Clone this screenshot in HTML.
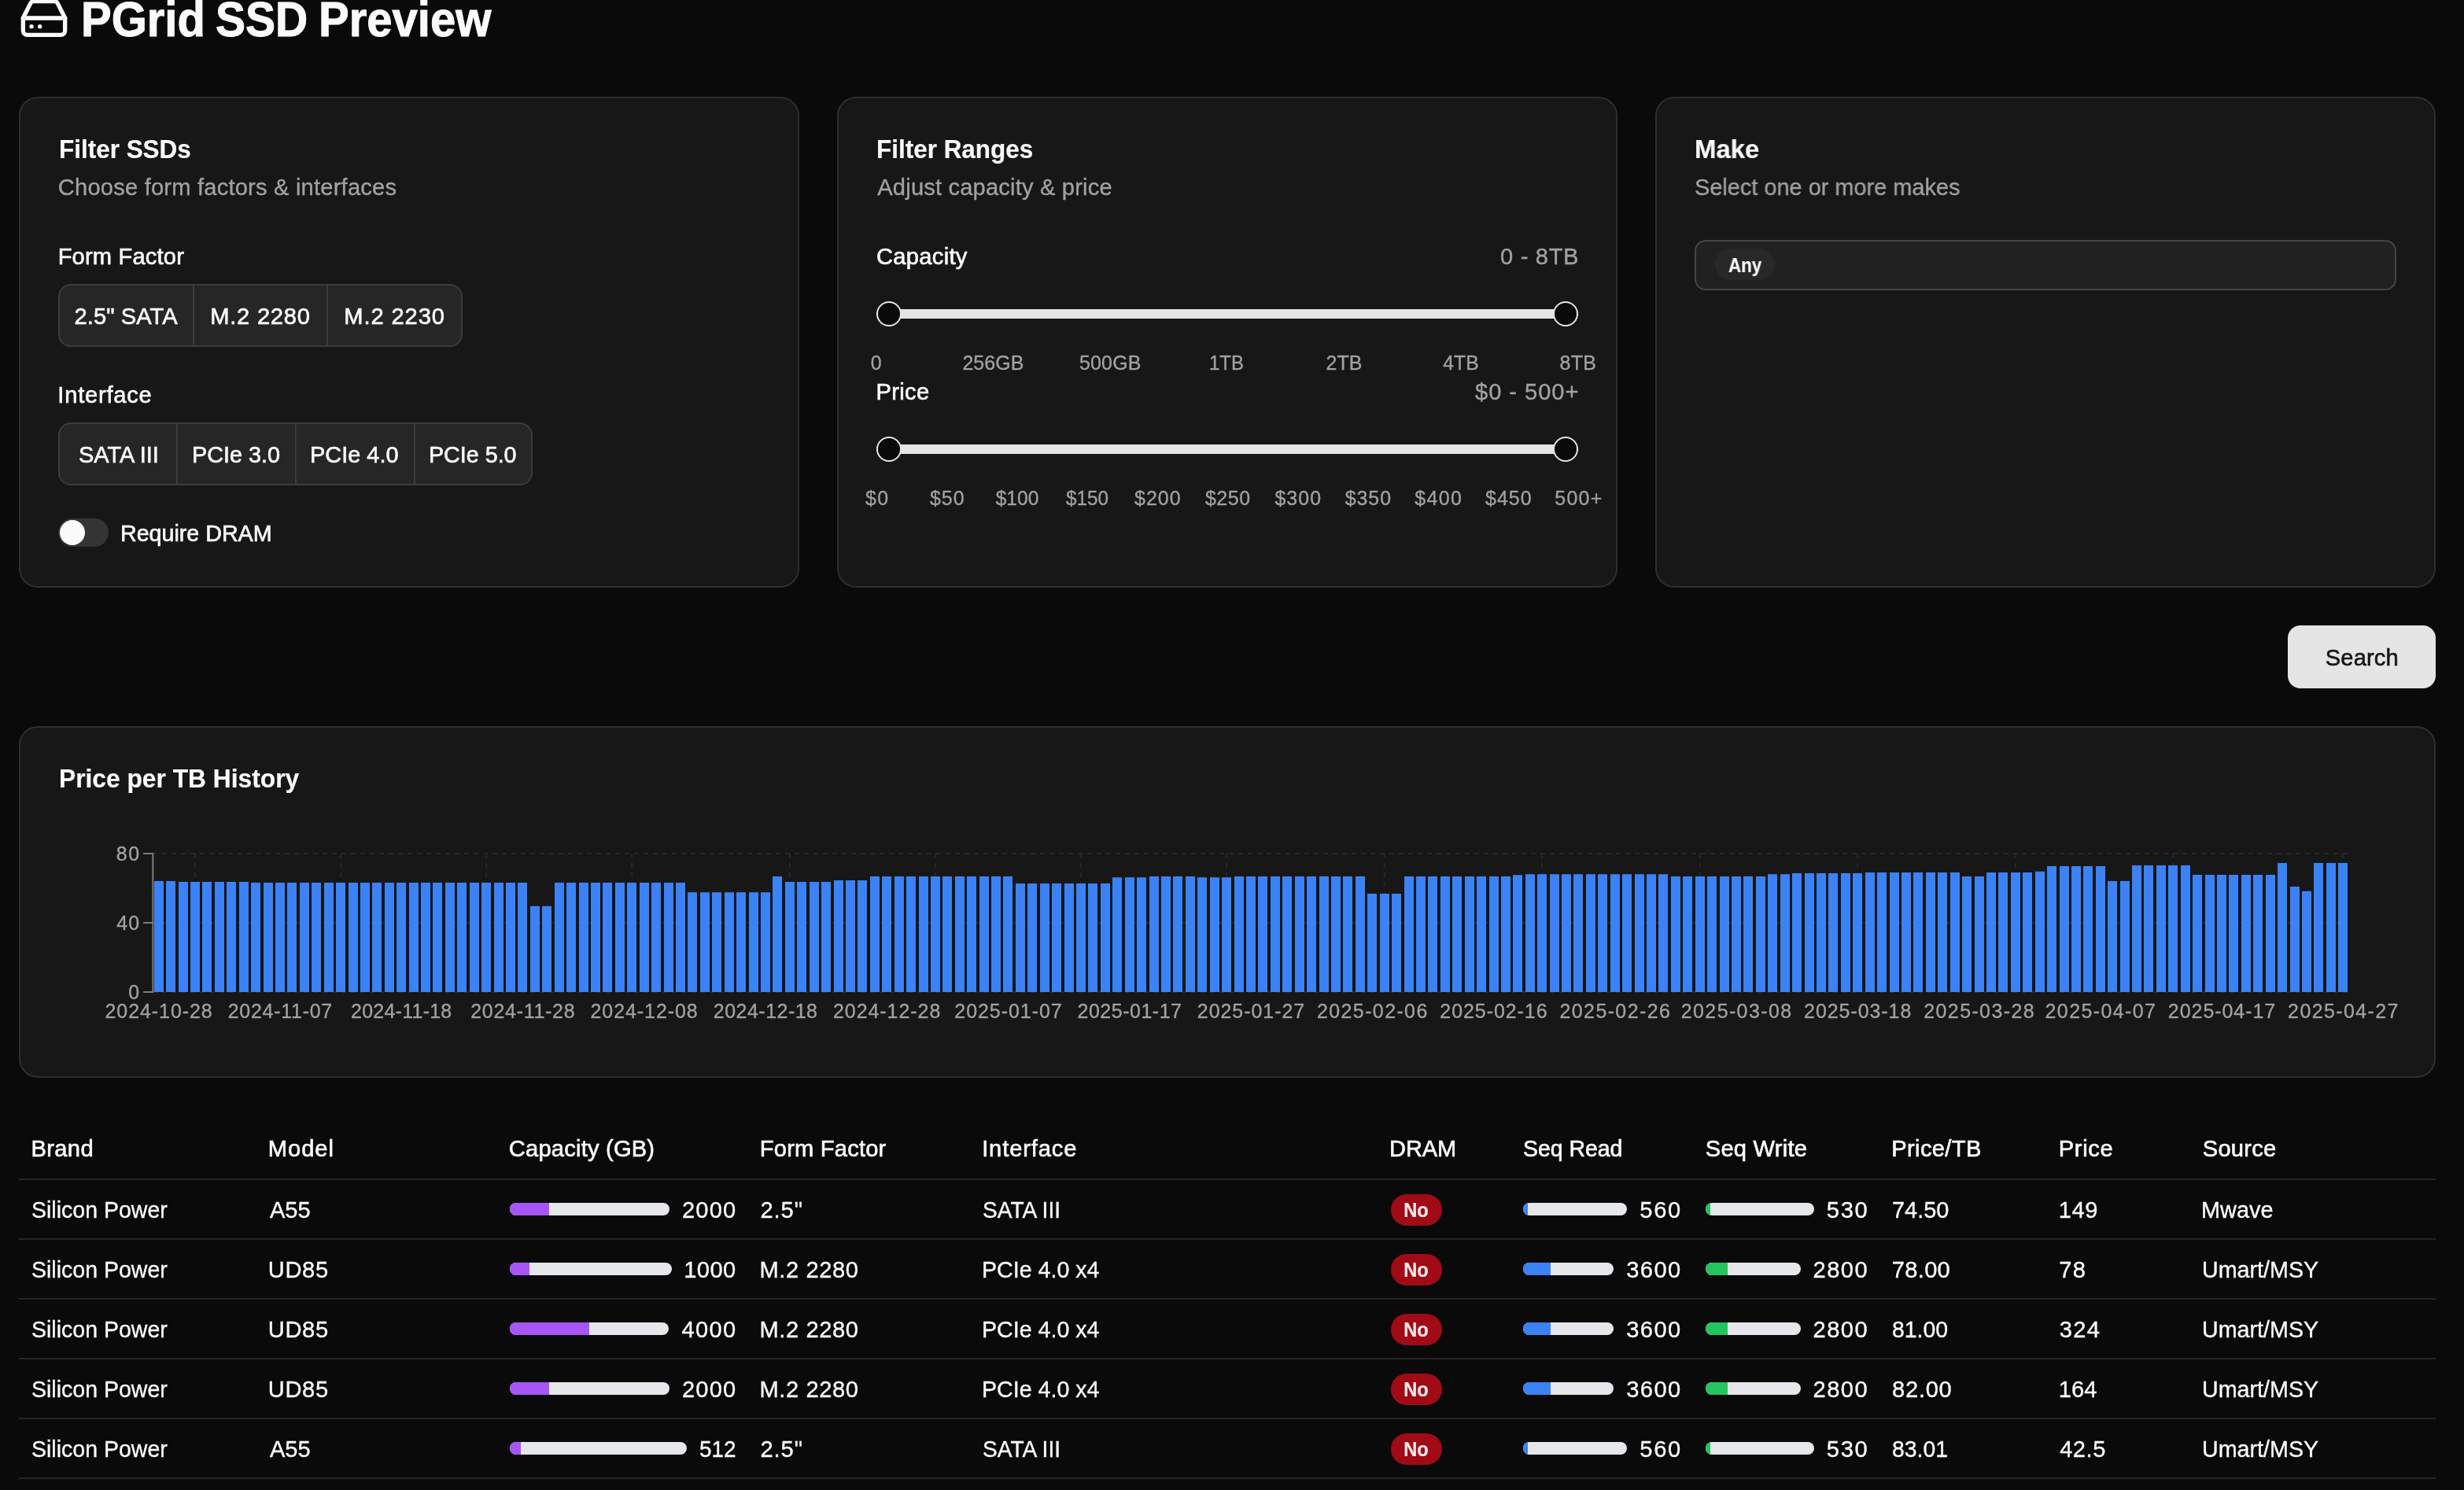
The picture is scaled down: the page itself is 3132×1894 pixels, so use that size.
<!DOCTYPE html>
<html><head><meta charset="utf-8"><title>PGrid SSD Preview</title>
<style>
html,body{margin:0;padding:0;background:#0a0a0a;}
body{width:3132px;height:1894px;position:relative;overflow:hidden;font-family:"Liberation Sans",sans-serif;}
#app{position:absolute;left:0;top:0;width:3132px;height:1894px;will-change:transform;}
.r{position:absolute;box-sizing:border-box;}
.t{position:absolute;white-space:nowrap;line-height:1;font-weight:400;}
</style></head><body><div id="app">
<svg class="r" style="left:24px;top:-9px" width="64" height="64" viewBox="0 0 24 24" fill="none" stroke="#fafafa" stroke-width="2" stroke-linecap="round" stroke-linejoin="round"><line x1="22" x2="2" y1="12" y2="12"/><path d="M5.45 5.11 2 12v6a2 2 0 0 0 2 2h16a2 2 0 0 0 2-2v-6l-3.45-6.89A2 2 0 0 0 16.76 4H7.24a2 2 0 0 0-1.79 1.11z"/><line x1="6" x2="6.01" y1="16" y2="16"/><line x1="10" x2="10.01" y1="16" y2="16"/></svg>
<span id="t1" class="t" style="font-size:62.4px;top:-6.45px;color:#fafafa;font-weight:700;-webkit-text-stroke:1.0px #fafafa;left:103.02px;transform-origin:0 50%;transform:scaleX(0.9295);">PGrid</span>
<span id="t2" class="t" style="font-size:62.4px;top:-6.45px;color:#fafafa;font-weight:700;-webkit-text-stroke:1.0px #fafafa;left:273.76px;transform-origin:0 50%;transform:scaleX(0.9138);">SSD</span>
<span id="t3" class="t" style="font-size:62.4px;top:-6.45px;color:#fafafa;font-weight:700;-webkit-text-stroke:1.0px #fafafa;left:404.62px;transform-origin:0 50%;transform:scaleX(0.9297);">Preview</span>
<div class="r" style="left:24.00px;top:123.00px;width:992.00px;height:624.00px;background:#171717;border:2px solid #2e2e2e;border-radius:24px;"></div>
<div class="r" style="left:1064.00px;top:123.00px;width:992.00px;height:624.00px;background:#171717;border:2px solid #2e2e2e;border-radius:24px;"></div>
<div class="r" style="left:2104.00px;top:123.00px;width:992.00px;height:624.00px;background:#171717;border:2px solid #2e2e2e;border-radius:24px;"></div>
<span id="t4" class="t" style="font-size:33.28px;top:173.11px;color:#fafafa;font-weight:700;-webkit-text-stroke:0.2px #fafafa;left:74.50px;transform-origin:0 50%;transform:scaleX(0.9454);">Filter SSDs</span>
<span id="t5" class="t" style="font-size:29.12px;top:223.69px;color:#a1a1a1;-webkit-text-stroke:0.35px #a1a1a1;letter-spacing:0.201px;left:73.87px;">Choose form factors &amp; interfaces</span>
<span id="t6" class="t" style="font-size:29.12px;top:311.69px;color:#fafafa;-webkit-text-stroke:0.65px #fafafa;letter-spacing:0.177px;left:73.66px;">Form Factor</span>
<div class="r" style="left:74.00px;top:361.00px;width:514.00px;height:80.00px;background:#262626;border:2px solid #3c3c3c;border-radius:16px;"></div>
<div class="r" style="left:245.00px;top:363.00px;width:2.00px;height:76.00px;background:#3c3c3c;"></div>
<div class="r" style="left:415.00px;top:363.00px;width:2.00px;height:76.00px;background:#3c3c3c;"></div>
<span id="t7" class="t" style="font-size:29.12px;top:387.69px;color:#fafafa;-webkit-text-stroke:0.65px #fafafa;letter-spacing:0.078px;left:94.49px;">2.5&quot; SATA</span>
<span id="t8" class="t" style="font-size:29.12px;top:387.69px;color:#fafafa;-webkit-text-stroke:0.65px #fafafa;letter-spacing:0.779px;left:267.16px;">M.2 2280</span>
<span id="t9" class="t" style="font-size:29.12px;top:387.69px;color:#fafafa;-webkit-text-stroke:0.65px #fafafa;letter-spacing:0.907px;left:437.26px;">M.2 2230</span>
<span id="t10" class="t" style="font-size:29.12px;top:487.69px;color:#fafafa;-webkit-text-stroke:0.65px #fafafa;letter-spacing:0.763px;left:73.36px;">Interface</span>
<div class="r" style="left:74.00px;top:537.00px;width:603.00px;height:80.00px;background:#262626;border:2px solid #3c3c3c;border-radius:16px;"></div>
<div class="r" style="left:224.00px;top:539.00px;width:2.00px;height:76.00px;background:#3c3c3c;"></div>
<div class="r" style="left:375.00px;top:539.00px;width:2.00px;height:76.00px;background:#3c3c3c;"></div>
<div class="r" style="left:525.50px;top:539.00px;width:2.00px;height:76.00px;background:#3c3c3c;"></div>
<span id="t11" class="t" style="font-size:29.12px;top:563.69px;color:#fafafa;-webkit-text-stroke:0.65px #fafafa;left:99.93px;transform-origin:0 50%;transform:scaleX(0.9945);">SATA III</span>
<span id="t12" class="t" style="font-size:29.12px;top:563.69px;color:#fafafa;-webkit-text-stroke:0.65px #fafafa;left:243.79px;transform-origin:0 50%;transform:scaleX(0.9886);">PCIe 3.0</span>
<span id="t13" class="t" style="font-size:29.12px;top:563.69px;color:#fafafa;-webkit-text-stroke:0.65px #fafafa;left:393.88px;transform-origin:0 50%;transform:scaleX(0.9931);">PCIe 4.0</span>
<span id="t14" class="t" style="font-size:29.12px;top:563.69px;color:#fafafa;-webkit-text-stroke:0.65px #fafafa;left:544.60px;transform-origin:0 50%;transform:scaleX(0.9849);">PCIe 5.0</span>
<div class="r" style="left:74.40px;top:659.00px;width:64.00px;height:36.00px;background:#343434;border-radius:18px;"></div>
<div class="r" style="left:76.00px;top:661.00px;width:32.00px;height:32.00px;background:#fafafa;border-radius:16px;"></div>
<span id="t15" class="t" style="font-size:29.12px;top:663.69px;color:#fafafa;-webkit-text-stroke:0.65px #fafafa;left:152.90px;transform-origin:0 50%;transform:scaleX(0.9839);">Require DRAM</span>
<span id="t16" class="t" style="font-size:33.28px;top:173.11px;color:#fafafa;font-weight:700;-webkit-text-stroke:0.2px #fafafa;left:1114.49px;transform-origin:0 50%;transform:scaleX(0.9457);">Filter Ranges</span>
<span id="t17" class="t" style="font-size:29.12px;top:223.69px;color:#a1a1a1;-webkit-text-stroke:0.35px #a1a1a1;letter-spacing:0.176px;left:1115.29px;">Adjust capacity &amp; price</span>
<span id="t18" class="t" style="font-size:29.12px;top:311.69px;color:#fafafa;-webkit-text-stroke:0.65px #fafafa;letter-spacing:0.310px;left:1113.97px;">Capacity</span>
<span id="t19" class="t" style="font-size:29.12px;top:311.69px;color:#a1a1a1;-webkit-text-stroke:0.35px #a1a1a1;letter-spacing:0.670px;right:1124.84px;">0 - 8TB</span>
<div class="r" style="left:1114.00px;top:393.00px;width:892.00px;height:12.00px;background:#e5e5e5;border-radius:6px;"></div>
<div class="r" style="left:1114.00px;top:383.00px;width:32.00px;height:32.00px;background:#0a0a0a;border:2px solid #e5e5e5;border-radius:16px;box-sizing:border-box;"></div>
<div class="r" style="left:1974.00px;top:383.00px;width:32.00px;height:32.00px;background:#0a0a0a;border:2px solid #e5e5e5;border-radius:16px;box-sizing:border-box;"></div>
<span id="t20" class="t" style="font-size:24.96px;top:448.77px;color:#a1a1a1;-webkit-text-stroke:0.35px #a1a1a1;letter-spacing:0.359px;left:1113.88px;transform:translateX(-50%);">0</span>
<span id="t21" class="t" style="font-size:24.96px;top:448.77px;color:#a1a1a1;-webkit-text-stroke:0.35px #a1a1a1;letter-spacing:0.046px;left:1262.42px;transform:translateX(-50%);">256GB</span>
<span id="t22" class="t" style="font-size:24.96px;top:448.77px;color:#a1a1a1;-webkit-text-stroke:0.35px #a1a1a1;letter-spacing:0.157px;left:1411.27px;transform:translateX(-50%);">500GB</span>
<span id="t23" class="t" style="font-size:24.96px;top:448.77px;color:#a1a1a1;-webkit-text-stroke:0.35px #a1a1a1;left:1559.42px;transform:translateX(-50%) scaleX(0.9613);">1TB</span>
<span id="t24" class="t" style="font-size:24.96px;top:448.77px;color:#a1a1a1;-webkit-text-stroke:0.35px #a1a1a1;letter-spacing:0.003px;left:1708.40px;transform:translateX(-50%);">2TB</span>
<span id="t25" class="t" style="font-size:24.96px;top:448.77px;color:#a1a1a1;-webkit-text-stroke:0.35px #a1a1a1;left:1857.40px;transform:translateX(-50%) scaleX(0.9937);">4TB</span>
<span id="t26" class="t" style="font-size:24.96px;top:448.77px;color:#a1a1a1;-webkit-text-stroke:0.35px #a1a1a1;letter-spacing:0.317px;left:2005.97px;transform:translateX(-50%);">8TB</span>
<span id="t27" class="t" style="font-size:29.12px;top:483.69px;color:#fafafa;-webkit-text-stroke:0.65px #fafafa;letter-spacing:0.364px;left:1113.46px;">Price</span>
<span id="t28" class="t" style="font-size:29.12px;top:483.69px;color:#a1a1a1;-webkit-text-stroke:0.35px #a1a1a1;letter-spacing:0.940px;right:1124.67px;">$0 - 500+</span>
<div class="r" style="left:1114.00px;top:565.00px;width:892.00px;height:12.00px;background:#e5e5e5;border-radius:6px;"></div>
<div class="r" style="left:1114.00px;top:555.00px;width:32.00px;height:32.00px;background:#0a0a0a;border:2px solid #e5e5e5;border-radius:16px;box-sizing:border-box;"></div>
<div class="r" style="left:1974.00px;top:555.00px;width:32.00px;height:32.00px;background:#0a0a0a;border:2px solid #e5e5e5;border-radius:16px;box-sizing:border-box;"></div>
<span id="t29" class="t" style="font-size:24.96px;top:620.77px;color:#a1a1a1;-webkit-text-stroke:0.35px #a1a1a1;letter-spacing:1.277px;left:1115.19px;transform:translateX(-50%);">$0</span>
<span id="t30" class="t" style="font-size:24.96px;top:620.77px;color:#a1a1a1;-webkit-text-stroke:0.35px #a1a1a1;letter-spacing:0.951px;left:1204.23px;transform:translateX(-50%);">$50</span>
<span id="t31" class="t" style="font-size:24.96px;top:620.77px;color:#a1a1a1;-webkit-text-stroke:0.35px #a1a1a1;left:1292.95px;transform:translateX(-50%) scaleX(0.9821);">$100</span>
<span id="t32" class="t" style="font-size:24.96px;top:620.77px;color:#a1a1a1;-webkit-text-stroke:0.35px #a1a1a1;left:1382.14px;transform:translateX(-50%) scaleX(0.9747);">$150</span>
<span id="t33" class="t" style="font-size:24.96px;top:620.77px;color:#a1a1a1;-webkit-text-stroke:0.35px #a1a1a1;letter-spacing:1.009px;left:1471.86px;transform:translateX(-50%);">$200</span>
<span id="t34" class="t" style="font-size:24.96px;top:620.77px;color:#a1a1a1;-webkit-text-stroke:0.35px #a1a1a1;letter-spacing:0.576px;left:1560.84px;transform:translateX(-50%);">$250</span>
<span id="t35" class="t" style="font-size:24.96px;top:620.77px;color:#a1a1a1;-webkit-text-stroke:0.35px #a1a1a1;letter-spacing:1.009px;left:1650.26px;transform:translateX(-50%);">$300</span>
<span id="t36" class="t" style="font-size:24.96px;top:620.77px;color:#a1a1a1;-webkit-text-stroke:0.35px #a1a1a1;letter-spacing:0.876px;left:1739.39px;transform:translateX(-50%);">$350</span>
<span id="t37" class="t" style="font-size:24.96px;top:620.77px;color:#a1a1a1;-webkit-text-stroke:0.35px #a1a1a1;letter-spacing:1.342px;left:1828.82px;transform:translateX(-50%);">$400</span>
<span id="t38" class="t" style="font-size:24.96px;top:620.77px;color:#a1a1a1;-webkit-text-stroke:0.35px #a1a1a1;letter-spacing:1.009px;left:1917.86px;transform:translateX(-50%);">$450</span>
<span id="t39" class="t" style="font-size:24.96px;top:620.77px;color:#a1a1a1;-webkit-text-stroke:0.35px #a1a1a1;letter-spacing:1.270px;left:2006.95px;transform:translateX(-50%);">500+</span>
<span id="t40" class="t" style="font-size:33.28px;top:173.11px;color:#fafafa;font-weight:700;-webkit-text-stroke:0.2px #fafafa;left:2154.40px;transform-origin:0 50%;transform:scaleX(0.9880);">Make</span>
<span id="t41" class="t" style="font-size:29.12px;top:223.69px;color:#a1a1a1;-webkit-text-stroke:0.35px #a1a1a1;left:2153.74px;transform-origin:0 50%;transform:scaleX(0.9932);">Select one or more makes</span>
<div class="r" style="left:2154.00px;top:305.00px;width:892.00px;height:64.00px;background:#212121;border:2px solid #444444;border-radius:14px;box-sizing:border-box;"></div>
<div class="r" style="left:2180.00px;top:316.00px;width:76.00px;height:40.00px;background:#282828;border-radius:20px;"></div>
<span id="t42" class="t" style="font-size:24.96px;top:324.77px;color:#fafafa;font-weight:700;-webkit-text-stroke:0.2px #fafafa;left:2197.24px;transform-origin:0 50%;transform:scaleX(0.8968);">Any</span>
<div class="r" style="left:2908.00px;top:795.00px;width:188.00px;height:80.00px;background:#e5e5e5;border-radius:16px;"></div>
<span id="t43" class="t" style="font-size:29.12px;top:821.69px;color:#171717;-webkit-text-stroke:0.65px #171717;letter-spacing:0.136px;left:3002.35px;transform:translateX(-50%);">Search</span>
<div class="r" style="left:24.00px;top:923.00px;width:3072.00px;height:447.00px;background:#171717;border:2px solid #2e2e2e;border-radius:24px;"></div>
<span id="t44" class="t" style="font-size:33.28px;top:973.11px;color:#fafafa;font-weight:700;-webkit-text-stroke:0.2px #fafafa;left:74.68px;transform-origin:0 50%;transform:scaleX(0.9542);">Price per TB History</span>
<svg class="r" style="left:0;top:1060px" width="3132" height="220" viewBox="0 1060 3132 220"><line x1="194" y1="1085" x2="2986" y2="1085" stroke="#272727" stroke-width="2" stroke-dasharray="6 6"/><line x1="194" y1="1173" x2="2986" y2="1173" stroke="#272727" stroke-width="2" stroke-dasharray="6 6"/><line x1="194" y1="1261" x2="2986" y2="1261" stroke="#272727" stroke-width="2" stroke-dasharray="6 6"/><line x1="248.0" y1="1085" x2="248.0" y2="1261" stroke="#272727" stroke-width="2" stroke-dasharray="6 6"/><line x1="433.1" y1="1085" x2="433.1" y2="1261" stroke="#272727" stroke-width="2" stroke-dasharray="6 6"/><line x1="618.2" y1="1085" x2="618.2" y2="1261" stroke="#272727" stroke-width="2" stroke-dasharray="6 6"/><line x1="803.3" y1="1085" x2="803.3" y2="1261" stroke="#272727" stroke-width="2" stroke-dasharray="6 6"/><line x1="1003.8" y1="1085" x2="1003.8" y2="1261" stroke="#272727" stroke-width="2" stroke-dasharray="6 6"/><line x1="1188.9" y1="1085" x2="1188.9" y2="1261" stroke="#272727" stroke-width="2" stroke-dasharray="6 6"/><line x1="1374.0" y1="1085" x2="1374.0" y2="1261" stroke="#272727" stroke-width="2" stroke-dasharray="6 6"/><line x1="1559.1" y1="1085" x2="1559.1" y2="1261" stroke="#272727" stroke-width="2" stroke-dasharray="6 6"/><line x1="1759.7" y1="1085" x2="1759.7" y2="1261" stroke="#272727" stroke-width="2" stroke-dasharray="6 6"/><line x1="1960.2" y1="1085" x2="1960.2" y2="1261" stroke="#272727" stroke-width="2" stroke-dasharray="6 6"/><line x1="2160.7" y1="1085" x2="2160.7" y2="1261" stroke="#272727" stroke-width="2" stroke-dasharray="6 6"/><line x1="2361.3" y1="1085" x2="2361.3" y2="1261" stroke="#272727" stroke-width="2" stroke-dasharray="6 6"/><line x1="2561.8" y1="1085" x2="2561.8" y2="1261" stroke="#272727" stroke-width="2" stroke-dasharray="6 6"/><line x1="2762.3" y1="1085" x2="2762.3" y2="1261" stroke="#272727" stroke-width="2" stroke-dasharray="6 6"/><line x1="2978.3" y1="1085" x2="2978.3" y2="1261" stroke="#272727" stroke-width="2" stroke-dasharray="6 6"/><path fill="#3b82f6" d="M196 1120.0h12V1261h-12zM211 1120.0h12V1261h-12zM227 1120.9h12V1261h-12zM242 1120.9h12V1261h-12zM257 1120.9h12V1261h-12zM273 1120.9h12V1261h-12zM288 1120.9h12V1261h-12zM304 1120.9h12V1261h-12zM319 1121.9h12V1261h-12zM335 1121.9h12V1261h-12zM350 1121.9h12V1261h-12zM365 1121.9h12V1261h-12zM381 1121.9h12V1261h-12zM396 1121.9h12V1261h-12zM412 1121.9h12V1261h-12zM427 1121.9h12V1261h-12zM443 1121.9h12V1261h-12zM458 1121.9h12V1261h-12zM473 1121.9h12V1261h-12zM489 1121.9h12V1261h-12zM504 1121.9h12V1261h-12zM520 1121.9h12V1261h-12zM535 1121.9h12V1261h-12zM550 1121.9h12V1261h-12zM566 1121.9h12V1261h-12zM581 1121.9h12V1261h-12zM597 1121.9h12V1261h-12zM612 1121.9h12V1261h-12zM628 1121.9h12V1261h-12zM643 1121.9h12V1261h-12zM658 1121.9h12V1261h-12zM674 1151.8h12V1261h-12zM689 1151.8h12V1261h-12zM705 1121.9h12V1261h-12zM720 1121.9h12V1261h-12zM736 1121.9h12V1261h-12zM751 1121.9h12V1261h-12zM766 1121.9h12V1261h-12zM782 1121.9h12V1261h-12zM797 1121.9h12V1261h-12zM813 1121.9h12V1261h-12zM828 1121.9h12V1261h-12zM844 1121.9h12V1261h-12zM859 1121.9h12V1261h-12zM874 1134.2h12V1261h-12zM890 1134.2h12V1261h-12zM905 1134.2h12V1261h-12zM921 1134.2h12V1261h-12zM936 1134.2h12V1261h-12zM952 1134.2h12V1261h-12zM967 1134.2h12V1261h-12zM982 1114.0h12V1261h-12zM998 1121.1h12V1261h-12zM1013 1121.1h12V1261h-12zM1029 1121.1h12V1261h-12zM1044 1121.1h12V1261h-12zM1060 1119.1h12V1261h-12zM1075 1119.1h12V1261h-12zM1090 1119.1h12V1261h-12zM1106 1114.0h12V1261h-12zM1121 1114.0h12V1261h-12zM1137 1114.0h12V1261h-12zM1152 1114.0h12V1261h-12zM1168 1114.0h12V1261h-12zM1183 1114.0h12V1261h-12zM1198 1114.0h12V1261h-12zM1214 1114.0h12V1261h-12zM1229 1114.0h12V1261h-12zM1245 1114.0h12V1261h-12zM1260 1114.0h12V1261h-12zM1275 1114.0h12V1261h-12zM1291 1123.1h12V1261h-12zM1306 1123.1h12V1261h-12zM1322 1123.1h12V1261h-12zM1337 1123.1h12V1261h-12zM1353 1123.1h12V1261h-12zM1368 1123.1h12V1261h-12zM1383 1123.1h12V1261h-12zM1399 1123.1h12V1261h-12zM1414 1115.2h12V1261h-12zM1430 1115.2h12V1261h-12zM1445 1115.2h12V1261h-12zM1461 1114.0h12V1261h-12zM1476 1114.0h12V1261h-12zM1491 1114.0h12V1261h-12zM1507 1114.0h12V1261h-12zM1522 1115.2h12V1261h-12zM1538 1115.2h12V1261h-12zM1553 1115.2h12V1261h-12zM1569 1114.0h12V1261h-12zM1584 1114.0h12V1261h-12zM1599 1114.0h12V1261h-12zM1615 1114.0h12V1261h-12zM1630 1114.0h12V1261h-12zM1646 1114.0h12V1261h-12zM1661 1114.0h12V1261h-12zM1677 1114.0h12V1261h-12zM1692 1114.0h12V1261h-12zM1707 1114.0h12V1261h-12zM1723 1114.0h12V1261h-12zM1738 1135.9h12V1261h-12zM1754 1135.9h12V1261h-12zM1769 1135.9h12V1261h-12zM1785 1114.0h12V1261h-12zM1800 1114.0h12V1261h-12zM1815 1114.0h12V1261h-12zM1831 1114.0h12V1261h-12zM1846 1114.0h12V1261h-12zM1862 1114.0h12V1261h-12zM1877 1114.0h12V1261h-12zM1893 1114.0h12V1261h-12zM1908 1114.0h12V1261h-12zM1923 1112.3h12V1261h-12zM1939 1111.2h12V1261h-12zM1954 1111.2h12V1261h-12zM1970 1111.2h12V1261h-12zM1985 1111.2h12V1261h-12zM2000 1111.2h12V1261h-12zM2016 1111.2h12V1261h-12zM2031 1111.2h12V1261h-12zM2047 1111.2h12V1261h-12zM2062 1111.2h12V1261h-12zM2078 1111.2h12V1261h-12zM2093 1111.2h12V1261h-12zM2108 1111.2h12V1261h-12zM2124 1114.0h12V1261h-12zM2139 1114.0h12V1261h-12zM2155 1114.0h12V1261h-12zM2170 1114.0h12V1261h-12zM2186 1114.0h12V1261h-12zM2201 1114.0h12V1261h-12zM2216 1114.0h12V1261h-12zM2232 1114.0h12V1261h-12zM2247 1111.2h12V1261h-12zM2263 1111.2h12V1261h-12zM2278 1110.1h12V1261h-12zM2294 1110.1h12V1261h-12zM2309 1110.1h12V1261h-12zM2324 1110.1h12V1261h-12zM2340 1110.1h12V1261h-12zM2355 1110.1h12V1261h-12zM2371 1108.9h12V1261h-12zM2386 1108.9h12V1261h-12zM2402 1108.9h12V1261h-12zM2417 1108.9h12V1261h-12zM2432 1108.9h12V1261h-12zM2448 1108.9h12V1261h-12zM2463 1108.9h12V1261h-12zM2479 1108.9h12V1261h-12zM2494 1114.0h12V1261h-12zM2510 1114.0h12V1261h-12zM2525 1108.9h12V1261h-12zM2540 1108.9h12V1261h-12zM2556 1108.9h12V1261h-12zM2571 1108.9h12V1261h-12zM2587 1107.8h12V1261h-12zM2602 1101.0h12V1261h-12zM2618 1101.0h12V1261h-12zM2633 1101.0h12V1261h-12zM2648 1101.0h12V1261h-12zM2664 1101.0h12V1261h-12zM2679 1120.0h12V1261h-12zM2695 1120.0h12V1261h-12zM2710 1100.1h12V1261h-12zM2725 1100.1h12V1261h-12zM2741 1100.1h12V1261h-12zM2756 1100.1h12V1261h-12zM2772 1100.1h12V1261h-12zM2787 1112.0h12V1261h-12zM2803 1112.0h12V1261h-12zM2818 1112.0h12V1261h-12zM2833 1112.0h12V1261h-12zM2849 1112.0h12V1261h-12zM2864 1112.0h12V1261h-12zM2880 1112.0h12V1261h-12zM2895 1097.0h12V1261h-12zM2911 1127.1h12V1261h-12zM2926 1132.7h12V1261h-12zM2941 1097.0h12V1261h-12zM2957 1097.0h12V1261h-12zM2972 1097.0h12V1261h-12z"/><path d="M194.4 1084V1262" stroke="#7d7d7d" stroke-width="2" fill="none"/><path d="M182 1085H194" stroke="#7d7d7d" stroke-width="2" fill="none"/><path d="M182 1173H194" stroke="#7d7d7d" stroke-width="2" fill="none"/><path d="M182 1261H194" stroke="#7d7d7d" stroke-width="2" fill="none"/></svg>
<span id="t45" class="t" style="font-size:24.96px;top:1072.77px;color:#a1a1a1;-webkit-text-stroke:0.35px #a1a1a1;letter-spacing:1.494px;right:2953.48px;">80</span>
<span id="t46" class="t" style="font-size:24.96px;top:1160.77px;color:#a1a1a1;-webkit-text-stroke:0.35px #a1a1a1;letter-spacing:0.982px;right:2953.99px;">40</span>
<span id="t47" class="t" style="font-size:24.96px;top:1248.77px;color:#a1a1a1;-webkit-text-stroke:0.35px #a1a1a1;letter-spacing:0.359px;right:2954.62px;">0</span>
<span id="t48" class="t" style="font-size:24.96px;top:1272.77px;color:#a1a1a1;-webkit-text-stroke:0.35px #a1a1a1;letter-spacing:0.954px;left:202.10px;transform:translateX(-50%);">2024-10-28</span>
<span id="t49" class="t" style="font-size:24.96px;top:1272.77px;color:#a1a1a1;-webkit-text-stroke:0.35px #a1a1a1;letter-spacing:0.735px;left:356.33px;transform:translateX(-50%);">2024-11-07</span>
<span id="t50" class="t" style="font-size:24.96px;top:1272.77px;color:#a1a1a1;-webkit-text-stroke:0.35px #a1a1a1;letter-spacing:0.271px;left:510.27px;transform:translateX(-50%);">2024-11-18</span>
<span id="t51" class="t" style="font-size:24.96px;top:1272.77px;color:#a1a1a1;-webkit-text-stroke:0.35px #a1a1a1;letter-spacing:0.716px;left:664.75px;transform:translateX(-50%);">2024-11-28</span>
<span id="t52" class="t" style="font-size:24.96px;top:1272.77px;color:#a1a1a1;-webkit-text-stroke:0.35px #a1a1a1;letter-spacing:0.954px;left:819.12px;transform:translateX(-50%);">2024-12-08</span>
<span id="t53" class="t" style="font-size:24.96px;top:1272.77px;color:#a1a1a1;-webkit-text-stroke:0.35px #a1a1a1;letter-spacing:0.509px;left:973.15px;transform:translateX(-50%);">2024-12-18</span>
<span id="t54" class="t" style="font-size:24.96px;top:1272.77px;color:#a1a1a1;-webkit-text-stroke:0.35px #a1a1a1;letter-spacing:0.954px;left:1127.63px;transform:translateX(-50%);">2024-12-28</span>
<span id="t55" class="t" style="font-size:24.96px;top:1272.77px;color:#a1a1a1;-webkit-text-stroke:0.35px #a1a1a1;letter-spacing:0.973px;left:1281.98px;transform:translateX(-50%);">2025-01-07</span>
<span id="t56" class="t" style="font-size:24.96px;top:1272.77px;color:#a1a1a1;-webkit-text-stroke:0.35px #a1a1a1;letter-spacing:0.528px;left:1436.01px;transform:translateX(-50%);">2025-01-17</span>
<span id="t57" class="t" style="font-size:24.96px;top:1272.77px;color:#a1a1a1;-webkit-text-stroke:0.35px #a1a1a1;letter-spacing:0.973px;left:1590.49px;transform:translateX(-50%);">2025-01-27</span>
<span id="t58" class="t" style="font-size:24.96px;top:1272.77px;color:#a1a1a1;-webkit-text-stroke:0.35px #a1a1a1;letter-spacing:1.400px;left:1744.87px;transform:translateX(-50%);">2025-02-06</span>
<span id="t59" class="t" style="font-size:24.96px;top:1272.77px;color:#a1a1a1;-webkit-text-stroke:0.35px #a1a1a1;letter-spacing:0.955px;left:1898.91px;transform:translateX(-50%);">2025-02-16</span>
<span id="t60" class="t" style="font-size:24.96px;top:1272.77px;color:#a1a1a1;-webkit-text-stroke:0.35px #a1a1a1;letter-spacing:1.400px;left:2053.38px;transform:translateX(-50%);">2025-02-26</span>
<span id="t61" class="t" style="font-size:24.96px;top:1272.77px;color:#a1a1a1;-webkit-text-stroke:0.35px #a1a1a1;letter-spacing:1.398px;left:2207.63px;transform:translateX(-50%);">2025-03-08</span>
<span id="t62" class="t" style="font-size:24.96px;top:1272.77px;color:#a1a1a1;-webkit-text-stroke:0.35px #a1a1a1;letter-spacing:0.954px;left:2361.66px;transform:translateX(-50%);">2025-03-18</span>
<span id="t63" class="t" style="font-size:24.96px;top:1272.77px;color:#a1a1a1;-webkit-text-stroke:0.35px #a1a1a1;letter-spacing:1.398px;left:2516.14px;transform:translateX(-50%);">2025-03-28</span>
<span id="t64" class="t" style="font-size:24.96px;top:1272.77px;color:#a1a1a1;-webkit-text-stroke:0.35px #a1a1a1;letter-spacing:1.417px;left:2670.49px;transform:translateX(-50%);">2025-04-07</span>
<span id="t65" class="t" style="font-size:24.96px;top:1272.77px;color:#a1a1a1;-webkit-text-stroke:0.35px #a1a1a1;letter-spacing:0.973px;left:2824.52px;transform:translateX(-50%);">2025-04-17</span>
<span id="t66" class="t" style="font-size:24.96px;top:1272.77px;color:#a1a1a1;-webkit-text-stroke:0.35px #a1a1a1;letter-spacing:1.417px;left:2979.00px;transform:translateX(-50%);">2025-04-27</span>
<span id="t67" class="t" style="font-size:29.12px;top:1445.69px;color:#fafafa;-webkit-text-stroke:0.65px #fafafa;letter-spacing:0.369px;left:39.46px;">Brand</span>
<span id="t68" class="t" style="font-size:29.12px;top:1445.69px;color:#fafafa;-webkit-text-stroke:0.65px #fafafa;letter-spacing:0.960px;left:340.86px;">Model</span>
<span id="t69" class="t" style="font-size:29.12px;top:1445.69px;color:#fafafa;-webkit-text-stroke:0.65px #fafafa;letter-spacing:0.199px;left:646.87px;">Capacity (GB)</span>
<span id="t70" class="t" style="font-size:29.12px;top:1445.69px;color:#fafafa;-webkit-text-stroke:0.65px #fafafa;letter-spacing:0.207px;left:965.76px;">Form Factor</span>
<span id="t71" class="t" style="font-size:29.12px;top:1445.69px;color:#fafafa;-webkit-text-stroke:0.65px #fafafa;letter-spacing:0.875px;left:1248.16px;">Interface</span>
<span id="t72" class="t" style="font-size:29.12px;top:1445.69px;color:#fafafa;-webkit-text-stroke:0.65px #fafafa;left:1766.27px;transform-origin:0 50%;transform:scaleX(0.9945);">DRAM</span>
<span id="t73" class="t" style="font-size:29.12px;top:1445.69px;color:#fafafa;-webkit-text-stroke:0.65px #fafafa;left:1935.66px;transform-origin:0 50%;transform:scaleX(0.9756);">Seq Read</span>
<span id="t74" class="t" style="font-size:29.12px;top:1445.69px;color:#fafafa;-webkit-text-stroke:0.65px #fafafa;letter-spacing:0.254px;left:2167.73px;">Seq Write</span>
<span id="t75" class="t" style="font-size:29.12px;top:1445.69px;color:#fafafa;-webkit-text-stroke:0.65px #fafafa;letter-spacing:0.359px;left:2404.26px;">Price/TB</span>
<span id="t76" class="t" style="font-size:29.12px;top:1445.69px;color:#fafafa;-webkit-text-stroke:0.65px #fafafa;letter-spacing:0.639px;left:2616.76px;">Price</span>
<span id="t77" class="t" style="font-size:29.12px;top:1445.69px;color:#fafafa;-webkit-text-stroke:0.65px #fafafa;letter-spacing:0.216px;left:2799.83px;">Source</span>
<div class="r" style="left:24.00px;top:1498.00px;width:3072.00px;height:2.00px;background:#252525;"></div>
<div class="r" style="left:24.00px;top:1574.00px;width:3072.00px;height:2.00px;background:#252525;"></div>
<span id="t78" class="t" style="font-size:29.12px;top:1523.69px;color:#fafafa;-webkit-text-stroke:0.35px #fafafa;left:40.25px;transform-origin:0 50%;transform:scaleX(0.9796);">Silicon Power</span>
<span id="t79" class="t" style="font-size:29.12px;top:1523.69px;color:#fafafa;-webkit-text-stroke:0.35px #fafafa;left:342.89px;transform-origin:0 50%;transform:scaleX(0.9977);">A55</span>
<span id="t80" class="t" style="font-size:29.12px;top:1523.69px;color:#fafafa;-webkit-text-stroke:0.35px #fafafa;letter-spacing:1.212px;right:2195.50px;">2000</span>
<div class="r" style="left:647.7px;top:1529.0px;width:203.3px;height:16px;border-radius:8px;background:#e5e7eb;overflow:hidden"><div style="width:50.8px;height:16px;background:#a855f7"></div></div>
<span id="t81" class="t" style="font-size:29.12px;top:1523.69px;color:#fafafa;-webkit-text-stroke:0.35px #fafafa;letter-spacing:0.930px;left:966.39px;">2.5&quot;</span>
<span id="t82" class="t" style="font-size:29.12px;top:1523.69px;color:#fafafa;-webkit-text-stroke:0.35px #fafafa;left:1249.27px;transform-origin:0 50%;transform:scaleX(0.9671);">SATA III</span>
<div class="r" style="left:1768.00px;top:1518.00px;width:65.00px;height:40.00px;background:#a00b16;border-radius:20px;"></div>
<span id="t83" class="t" style="font-size:24.96px;top:1525.77px;color:#fde8e8;font-weight:700;-webkit-text-stroke:0.2px #fde8e8;left:1800.37px;transform:translateX(-50%) scaleX(0.9503);">No</span>
<span id="t84" class="t" style="font-size:29.12px;top:1523.69px;color:#fafafa;-webkit-text-stroke:0.35px #fafafa;letter-spacing:1.763px;right:993.95px;">560</span>
<div class="r" style="left:1936.0px;top:1529.0px;width:132.0px;height:16px;border-radius:8px;background:#e5e7eb;overflow:hidden"><div style="width:6.2px;height:16px;background:#3b82f6"></div></div>
<span id="t85" class="t" style="font-size:29.12px;top:1523.69px;color:#fafafa;-webkit-text-stroke:0.35px #fafafa;letter-spacing:1.763px;right:756.45px;">530</span>
<div class="r" style="left:2168.0px;top:1529.0px;width:137.5px;height:16px;border-radius:8px;background:#e5e7eb;overflow:hidden"><div style="width:6.1px;height:16px;background:#22c55e"></div></div>
<span id="t86" class="t" style="font-size:29.12px;top:1523.69px;color:#fafafa;-webkit-text-stroke:0.35px #fafafa;left:2404.87px;transform-origin:0 50%;transform:scaleX(0.9939);">74.50</span>
<span id="t87" class="t" style="font-size:29.12px;top:1523.69px;color:#fafafa;-webkit-text-stroke:0.35px #fafafa;letter-spacing:0.660px;left:2616.63px;">149</span>
<span id="t88" class="t" style="font-size:29.12px;top:1523.69px;color:#fafafa;-webkit-text-stroke:0.35px #fafafa;left:2798.48px;transform-origin:0 50%;transform:scaleX(0.9917);">Mwave</span>
<div class="r" style="left:24.00px;top:1650.00px;width:3072.00px;height:2.00px;background:#252525;"></div>
<span id="t89" class="t" style="font-size:29.12px;top:1599.69px;color:#fafafa;-webkit-text-stroke:0.35px #fafafa;left:40.25px;transform-origin:0 50%;transform:scaleX(0.9796);">Silicon Power</span>
<span id="t90" class="t" style="font-size:29.12px;top:1599.69px;color:#fafafa;-webkit-text-stroke:0.35px #fafafa;letter-spacing:0.677px;left:340.70px;">UD85</span>
<span id="t91" class="t" style="font-size:29.12px;top:1599.69px;color:#fafafa;-webkit-text-stroke:0.35px #fafafa;letter-spacing:0.463px;right:2196.25px;">1000</span>
<div class="r" style="left:647.7px;top:1605.0px;width:206.3px;height:16px;border-radius:8px;background:#e5e7eb;overflow:hidden"><div style="width:25.8px;height:16px;background:#a855f7"></div></div>
<span id="t92" class="t" style="font-size:29.12px;top:1599.69px;color:#fafafa;-webkit-text-stroke:0.35px #fafafa;letter-spacing:0.593px;left:965.46px;">M.2 2280</span>
<span id="t93" class="t" style="font-size:29.12px;top:1599.69px;color:#fafafa;-webkit-text-stroke:0.35px #fafafa;left:1248.20px;transform-origin:0 50%;transform:scaleX(0.9828);">PCIe 4.0 x4</span>
<div class="r" style="left:1768.00px;top:1594.00px;width:65.00px;height:40.00px;background:#a00b16;border-radius:20px;"></div>
<span id="t94" class="t" style="font-size:24.96px;top:1601.77px;color:#fde8e8;font-weight:700;-webkit-text-stroke:0.2px #fde8e8;left:1800.37px;transform:translateX(-50%) scaleX(0.9503);">No</span>
<span id="t95" class="t" style="font-size:29.12px;top:1599.69px;color:#fafafa;-webkit-text-stroke:0.35px #fafafa;letter-spacing:1.427px;right:994.29px;">3600</span>
<div class="r" style="left:1936.0px;top:1605.0px;width:115.0px;height:16px;border-radius:8px;background:#e5e7eb;overflow:hidden"><div style="width:34.5px;height:16px;background:#3b82f6"></div></div>
<span id="t96" class="t" style="font-size:29.12px;top:1599.69px;color:#fafafa;-webkit-text-stroke:0.35px #fafafa;letter-spacing:1.545px;right:756.67px;">2800</span>
<div class="r" style="left:2168.0px;top:1605.0px;width:120.5px;height:16px;border-radius:8px;background:#e5e7eb;overflow:hidden"><div style="width:28.1px;height:16px;background:#22c55e"></div></div>
<span id="t97" class="t" style="font-size:29.12px;top:1599.69px;color:#fafafa;-webkit-text-stroke:0.35px #fafafa;letter-spacing:0.268px;left:2404.86px;">78.00</span>
<span id="t98" class="t" style="font-size:29.12px;top:1599.69px;color:#fafafa;-webkit-text-stroke:0.35px #fafafa;letter-spacing:1.167px;left:2617.36px;">78</span>
<span id="t99" class="t" style="font-size:29.12px;top:1599.69px;color:#fafafa;-webkit-text-stroke:0.35px #fafafa;left:2798.64px;transform-origin:0 50%;transform:scaleX(0.9848);">Umart/MSY</span>
<div class="r" style="left:24.00px;top:1726.00px;width:3072.00px;height:2.00px;background:#252525;"></div>
<span id="t100" class="t" style="font-size:29.12px;top:1675.69px;color:#fafafa;-webkit-text-stroke:0.35px #fafafa;left:40.25px;transform-origin:0 50%;transform:scaleX(0.9796);">Silicon Power</span>
<span id="t101" class="t" style="font-size:29.12px;top:1675.69px;color:#fafafa;-webkit-text-stroke:0.35px #fafafa;letter-spacing:0.677px;left:340.70px;">UD85</span>
<span id="t102" class="t" style="font-size:29.12px;top:1675.69px;color:#fafafa;-webkit-text-stroke:0.35px #fafafa;letter-spacing:1.380px;right:2195.33px;">4000</span>
<div class="r" style="left:647.7px;top:1681.0px;width:202.0px;height:16px;border-radius:8px;background:#e5e7eb;overflow:hidden"><div style="width:101.0px;height:16px;background:#a855f7"></div></div>
<span id="t103" class="t" style="font-size:29.12px;top:1675.69px;color:#fafafa;-webkit-text-stroke:0.35px #fafafa;letter-spacing:0.593px;left:965.46px;">M.2 2280</span>
<span id="t104" class="t" style="font-size:29.12px;top:1675.69px;color:#fafafa;-webkit-text-stroke:0.35px #fafafa;left:1248.20px;transform-origin:0 50%;transform:scaleX(0.9828);">PCIe 4.0 x4</span>
<div class="r" style="left:1768.00px;top:1670.00px;width:65.00px;height:40.00px;background:#a00b16;border-radius:20px;"></div>
<span id="t105" class="t" style="font-size:24.96px;top:1677.77px;color:#fde8e8;font-weight:700;-webkit-text-stroke:0.2px #fde8e8;left:1800.37px;transform:translateX(-50%) scaleX(0.9503);">No</span>
<span id="t106" class="t" style="font-size:29.12px;top:1675.69px;color:#fafafa;-webkit-text-stroke:0.35px #fafafa;letter-spacing:1.427px;right:994.29px;">3600</span>
<div class="r" style="left:1936.0px;top:1681.0px;width:115.0px;height:16px;border-radius:8px;background:#e5e7eb;overflow:hidden"><div style="width:34.5px;height:16px;background:#3b82f6"></div></div>
<span id="t107" class="t" style="font-size:29.12px;top:1675.69px;color:#fafafa;-webkit-text-stroke:0.35px #fafafa;letter-spacing:1.545px;right:756.67px;">2800</span>
<div class="r" style="left:2168.0px;top:1681.0px;width:120.5px;height:16px;border-radius:8px;background:#e5e7eb;overflow:hidden"><div style="width:28.1px;height:16px;background:#22c55e"></div></div>
<span id="t108" class="t" style="font-size:29.12px;top:1675.69px;color:#fafafa;-webkit-text-stroke:0.35px #fafafa;left:2405.11px;transform-origin:0 50%;transform:scaleX(0.9765);">81.00</span>
<span id="t109" class="t" style="font-size:29.12px;top:1675.69px;color:#fafafa;-webkit-text-stroke:0.35px #fafafa;letter-spacing:1.342px;left:2617.74px;">324</span>
<span id="t110" class="t" style="font-size:29.12px;top:1675.69px;color:#fafafa;-webkit-text-stroke:0.35px #fafafa;left:2798.64px;transform-origin:0 50%;transform:scaleX(0.9848);">Umart/MSY</span>
<div class="r" style="left:24.00px;top:1802.00px;width:3072.00px;height:2.00px;background:#252525;"></div>
<span id="t111" class="t" style="font-size:29.12px;top:1751.69px;color:#fafafa;-webkit-text-stroke:0.35px #fafafa;left:40.25px;transform-origin:0 50%;transform:scaleX(0.9796);">Silicon Power</span>
<span id="t112" class="t" style="font-size:29.12px;top:1751.69px;color:#fafafa;-webkit-text-stroke:0.35px #fafafa;letter-spacing:0.677px;left:340.70px;">UD85</span>
<span id="t113" class="t" style="font-size:29.12px;top:1751.69px;color:#fafafa;-webkit-text-stroke:0.35px #fafafa;letter-spacing:1.212px;right:2195.50px;">2000</span>
<div class="r" style="left:647.7px;top:1757.0px;width:203.3px;height:16px;border-radius:8px;background:#e5e7eb;overflow:hidden"><div style="width:50.8px;height:16px;background:#a855f7"></div></div>
<span id="t114" class="t" style="font-size:29.12px;top:1751.69px;color:#fafafa;-webkit-text-stroke:0.35px #fafafa;letter-spacing:0.593px;left:965.46px;">M.2 2280</span>
<span id="t115" class="t" style="font-size:29.12px;top:1751.69px;color:#fafafa;-webkit-text-stroke:0.35px #fafafa;left:1248.20px;transform-origin:0 50%;transform:scaleX(0.9828);">PCIe 4.0 x4</span>
<div class="r" style="left:1768.00px;top:1746.00px;width:65.00px;height:40.00px;background:#a00b16;border-radius:20px;"></div>
<span id="t116" class="t" style="font-size:24.96px;top:1753.77px;color:#fde8e8;font-weight:700;-webkit-text-stroke:0.2px #fde8e8;left:1800.37px;transform:translateX(-50%) scaleX(0.9503);">No</span>
<span id="t117" class="t" style="font-size:29.12px;top:1751.69px;color:#fafafa;-webkit-text-stroke:0.35px #fafafa;letter-spacing:1.427px;right:994.29px;">3600</span>
<div class="r" style="left:1936.0px;top:1757.0px;width:115.0px;height:16px;border-radius:8px;background:#e5e7eb;overflow:hidden"><div style="width:34.5px;height:16px;background:#3b82f6"></div></div>
<span id="t118" class="t" style="font-size:29.12px;top:1751.69px;color:#fafafa;-webkit-text-stroke:0.35px #fafafa;letter-spacing:1.545px;right:756.67px;">2800</span>
<div class="r" style="left:2168.0px;top:1757.0px;width:120.5px;height:16px;border-radius:8px;background:#e5e7eb;overflow:hidden"><div style="width:28.1px;height:16px;background:#22c55e"></div></div>
<span id="t119" class="t" style="font-size:29.12px;top:1751.69px;color:#fafafa;-webkit-text-stroke:0.35px #fafafa;letter-spacing:0.711px;left:2405.08px;">82.00</span>
<span id="t120" class="t" style="font-size:29.12px;top:1751.69px;color:#fafafa;-webkit-text-stroke:0.35px #fafafa;letter-spacing:0.147px;left:2616.63px;">164</span>
<span id="t121" class="t" style="font-size:29.12px;top:1751.69px;color:#fafafa;-webkit-text-stroke:0.35px #fafafa;left:2798.64px;transform-origin:0 50%;transform:scaleX(0.9848);">Umart/MSY</span>
<div class="r" style="left:24.00px;top:1878.00px;width:3072.00px;height:2.00px;background:#252525;"></div>
<span id="t122" class="t" style="font-size:29.12px;top:1827.69px;color:#fafafa;-webkit-text-stroke:0.35px #fafafa;left:40.25px;transform-origin:0 50%;transform:scaleX(0.9796);">Silicon Power</span>
<span id="t123" class="t" style="font-size:29.12px;top:1827.69px;color:#fafafa;-webkit-text-stroke:0.35px #fafafa;left:342.89px;transform-origin:0 50%;transform:scaleX(0.9977);">A55</span>
<span id="t124" class="t" style="font-size:29.12px;top:1827.69px;color:#fafafa;-webkit-text-stroke:0.35px #fafafa;right:2196.45px;transform-origin:100% 50%;transform:scaleX(0.9576);">512</span>
<div class="r" style="left:647.7px;top:1833.0px;width:225.1px;height:16px;border-radius:8px;background:#e5e7eb;overflow:hidden"><div style="width:14.4px;height:16px;background:#a855f7"></div></div>
<span id="t125" class="t" style="font-size:29.12px;top:1827.69px;color:#fafafa;-webkit-text-stroke:0.35px #fafafa;letter-spacing:0.930px;left:966.39px;">2.5&quot;</span>
<span id="t126" class="t" style="font-size:29.12px;top:1827.69px;color:#fafafa;-webkit-text-stroke:0.35px #fafafa;left:1249.27px;transform-origin:0 50%;transform:scaleX(0.9671);">SATA III</span>
<div class="r" style="left:1768.00px;top:1822.00px;width:65.00px;height:40.00px;background:#a00b16;border-radius:20px;"></div>
<span id="t127" class="t" style="font-size:24.96px;top:1829.77px;color:#fde8e8;font-weight:700;-webkit-text-stroke:0.2px #fde8e8;left:1800.37px;transform:translateX(-50%) scaleX(0.9503);">No</span>
<span id="t128" class="t" style="font-size:29.12px;top:1827.69px;color:#fafafa;-webkit-text-stroke:0.35px #fafafa;letter-spacing:1.763px;right:993.95px;">560</span>
<div class="r" style="left:1936.0px;top:1833.0px;width:132.0px;height:16px;border-radius:8px;background:#e5e7eb;overflow:hidden"><div style="width:6.2px;height:16px;background:#3b82f6"></div></div>
<span id="t129" class="t" style="font-size:29.12px;top:1827.69px;color:#fafafa;-webkit-text-stroke:0.35px #fafafa;letter-spacing:1.763px;right:756.45px;">530</span>
<div class="r" style="left:2168.0px;top:1833.0px;width:137.5px;height:16px;border-radius:8px;background:#e5e7eb;overflow:hidden"><div style="width:6.1px;height:16px;background:#22c55e"></div></div>
<span id="t130" class="t" style="font-size:29.12px;top:1827.69px;color:#fafafa;-webkit-text-stroke:0.35px #fafafa;left:2405.12px;transform-origin:0 50%;transform:scaleX(0.9733);">83.01</span>
<span id="t131" class="t" style="font-size:29.12px;top:1827.69px;color:#fafafa;-webkit-text-stroke:0.35px #fafafa;letter-spacing:0.512px;left:2618.18px;">42.5</span>
<span id="t132" class="t" style="font-size:29.12px;top:1827.69px;color:#fafafa;-webkit-text-stroke:0.35px #fafafa;left:2798.64px;transform-origin:0 50%;transform:scaleX(0.9848);">Umart/MSY</span>
</div></body></html>
